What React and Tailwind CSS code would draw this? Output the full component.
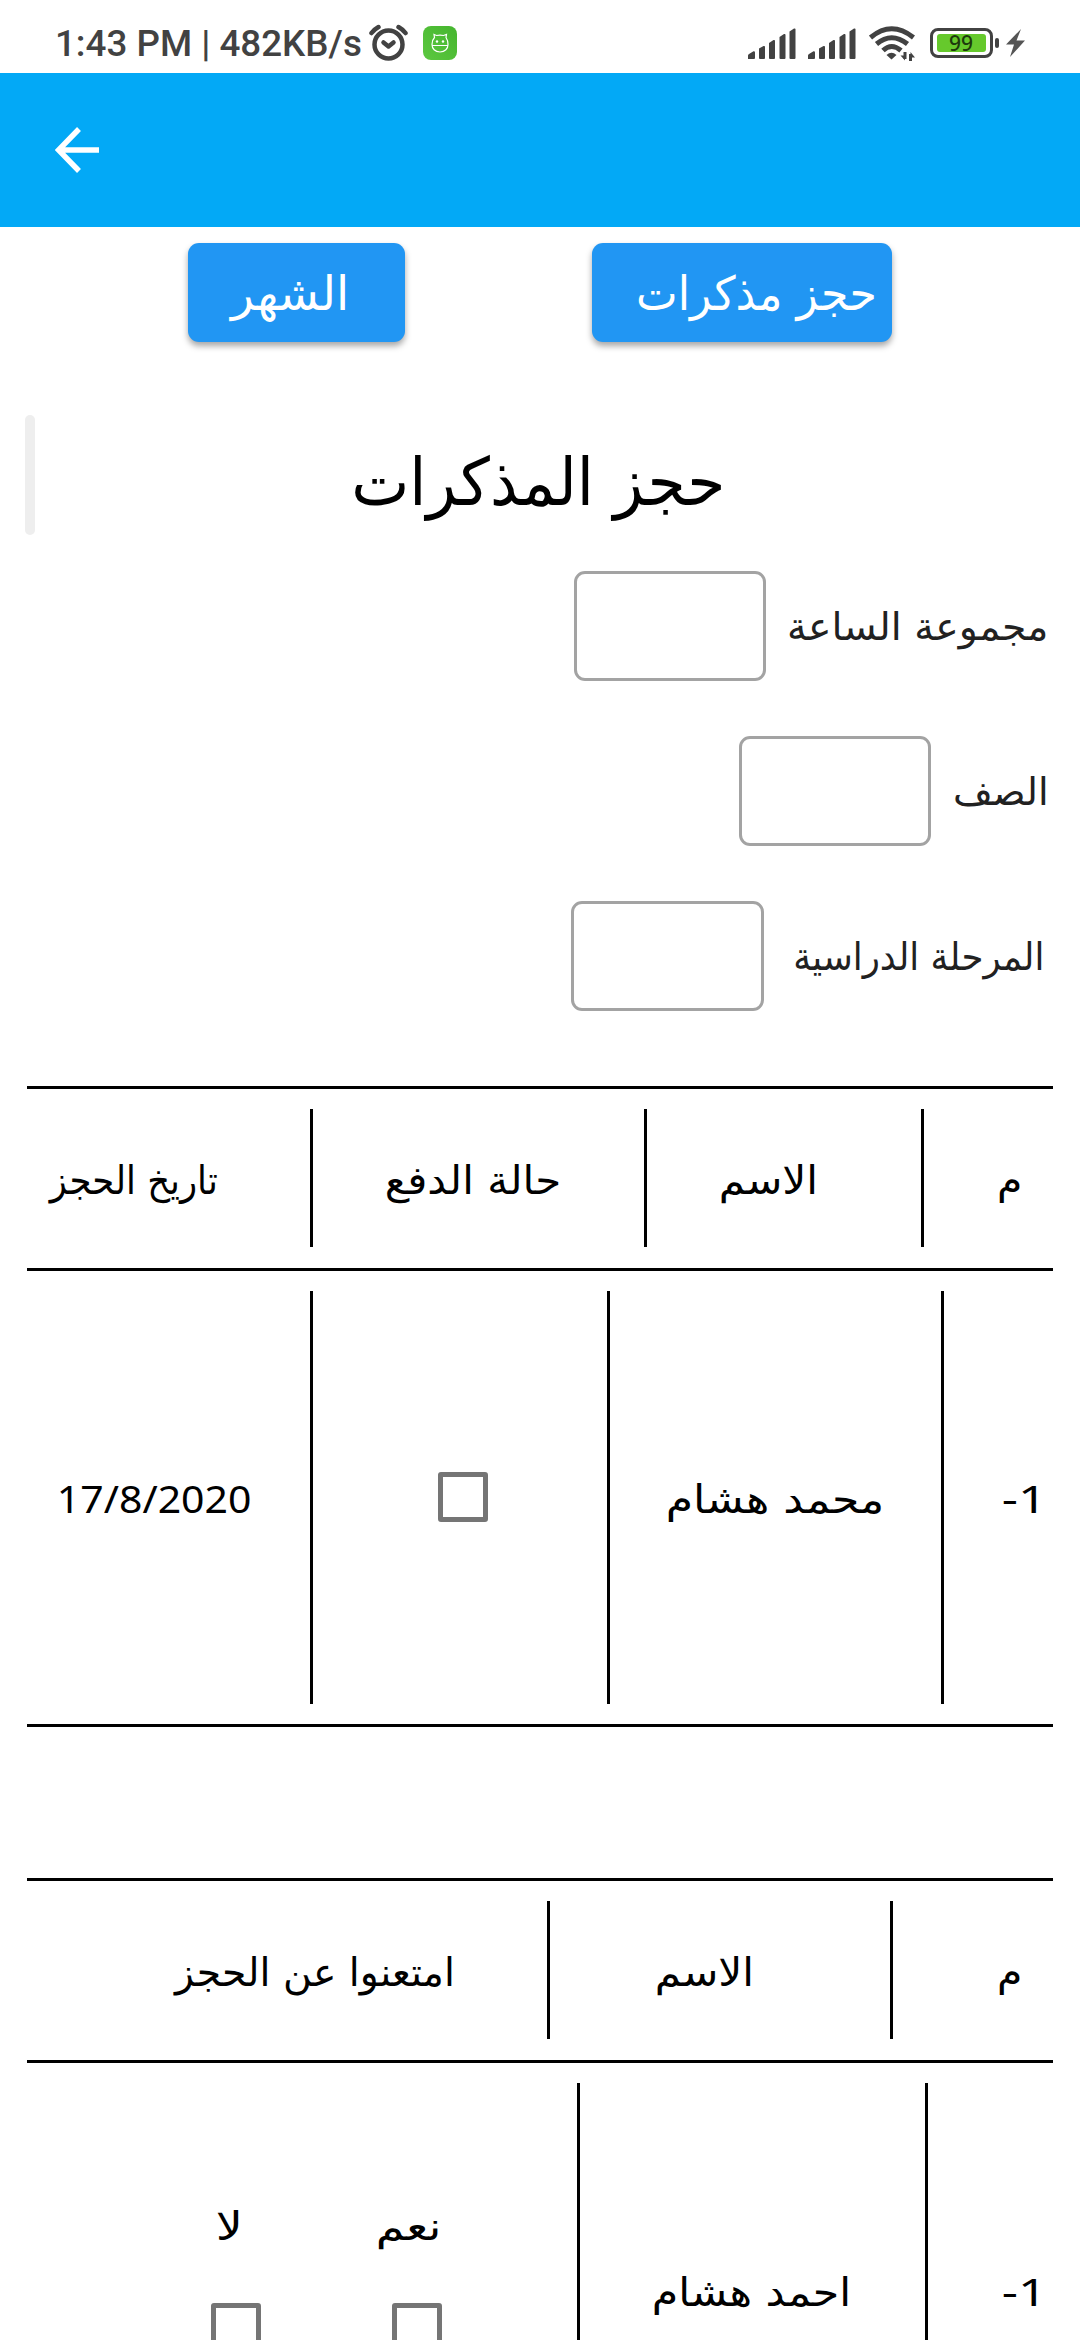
import { useLayoutEffect, useRef, useState } from "react";

// Single line of text whose visible glyphs span exactly the width of its box.
function Fit({ className = "", dir = "rtl", children }) {
  const box = useRef(null);
  const [fit, setFit] = useState({ scale: 1, shift: 0 });
  useLayoutEffect(() => {
    const measure = () => {
      const style = getComputedStyle(box.current);
      const ctx = document.createElement("canvas").getContext("2d");
      ctx.font = `${style.fontWeight} ${style.fontSize} ${style.fontFamily}`;
      ctx.direction = dir;
      ctx.textAlign = "left";
      const m = ctx.measureText(children);
      const ink = m.actualBoundingBoxLeft + m.actualBoundingBoxRight;
      const scale = box.current.clientWidth / ink;
      setFit({ scale, shift: m.actualBoundingBoxLeft * scale });
    };
    measure();
    document.fonts.ready.then(measure);
  }, [children, dir]);
  return (
    <div ref={box} dir="ltr" className={`shrink-0 whitespace-nowrap leading-none ${className}`}>
      <span
        dir={dir}
        className="inline-block origin-left align-top"
        style={{ transform: `translateX(${fit.shift}px) scaleX(${fit.scale})` }}
      >
        {children}
      </span>
    </div>
  );
}

const Line = ({ className = "" }) => <div className={`shrink-0 w-[3px] bg-black ${className}`} />;
const Rule = () => <div className="ml-[27px] h-[3px] w-[1026px] shrink-0 bg-black" />;
const Check = ({ className = "" }) => (
  <div className={`size-[50px] shrink-0 rounded-[3px] border-[5px] border-[#757575] ${className}`} />
);

function Signal() {
  return (
    <svg className="h-[31px] w-[48px]" viewBox="0 0 48 31" fill="#424242">
      <path d="M0 31V27.5Q0 26.5 1 26L5.5 23.3Q7 23 7 24.5V30Q7 31 6 31Z" />
      <path d="M11 30V20.5L15.5 18Q17 17.5 17 19V30Q17 31 16 31H12Q11 31 11 30Z" />
      <path d="M21 30V15L25.500 12Q27 11.500 27 13V30Q27 31 26 31H22Q21 31 21 30Z" />
      <path d="M31.500 30V9L36 6Q37.500 5.500 37.500 7V30Q37.500 31 36.500 31H32.500Q31.500 31 31.500 30Z" />
      <path d="M41.500 30V3.500L46 .5Q47.500 0 47.500 1.500V30Q47.500 31 46.500 31H42.500Q41.500 31 41.500 30Z" />
    </svg>
  );
}

function StatusBar() {
  return (
    <div className="flex h-[73px] shrink-0 items-start bg-white text-[#424242]">
      <Fit dir="ltr" className="ml-[58px] mt-[26px] w-[303px] font-['Roboto'] text-[36.5px] font-medium">
        1:43 PM | 482KB/s
      </Fit>
      <svg className="ml-[8px] mt-[24px] h-[38px] w-[39px]" viewBox="0 0 39 38" fill="none" stroke="#424242">
        <circle cx="19.500" cy="20.500" r="14" strokeWidth="4.500" />
        <path d="M2.500 9Q5 5.500 9.500 3M36.500 9Q34 5.500 29.500 3" strokeWidth="4.500" strokeLinecap="round" />
        <path d="M14.500 18.500L19.500 22.500L24.500 18.500" strokeWidth="4.500" strokeLinecap="round" strokeLinejoin="round" />
      </svg>
      <svg className="ml-[15px] mt-[26px] h-[34px] w-[34px]" viewBox="0 0 34 34">
        <defs>
          <linearGradient id="leaf" x1="0" y1="1" x2="1" y2="0">
            <stop offset="0" stopColor="#5cc840" />
            <stop offset="1" stopColor="#45b52e" />
          </linearGradient>
        </defs>
        <rect width="34" height="34" rx="8" fill="url(#leaf)" />
        <path
          d="M9 18.500C9 22.500 12 26 17 26S25 22.500 25 18.500C25 15 24 13 23 11.500L23.500 8.500L20.500 9.500Q17 8.800 13.500 9.500L11 8.500L11.500 11.500C9.500 13.500 9 15.500 9 18.500ZM9 19.500H25"
          fill="none"
          stroke="#fff"
          strokeWidth="1.200"
        />
        <circle cx="14" cy="15.500" r="1.200" fill="#fff" />
        <circle cx="20" cy="15.500" r="1.200" fill="#fff" />
      </svg>
      <div className="ml-[291px] mt-[28px] flex gap-[12px]">
        <Signal />
        <Signal />
      </div>
      <svg className="ml-[13px] mt-[26px] h-[35px] w-[46px]" viewBox="0 0 46 35" fill="none" stroke="#424242" strokeWidth="5">
        <path d="M1.500 11.500Q22.500 -6 44.500 11.500" />
        <path d="M7.500 18Q22.500 5.500 38.500 18" />
        <path d="M14 24.500Q22.500 16.500 32 24.500" />
        <path d="M17.500 29Q22.500 24.500 27.500 29L22.500 33.500Z" fill="#424242" stroke="none" />
        <path d="M36 26V33M41.500 35V28" strokeWidth="3" />
        <path d="M31.500 29.500H36V34.500ZM46 31.500H41.500V26Z" fill="#424242" stroke="none" />
      </svg>
      <div className="ml-[15px] mt-[28px] flex h-[30px] w-[63px] items-center justify-center rounded-[8px] border-[3px] border-[#424242]">
        <div className="flex h-[18px] w-[49px] items-center rounded-[3px] bg-[#66c92c] pl-[12px] text-[#1d3a0c]">
          <Fit dir="ltr" className="w-[24px] font-['Noto_Sans'] text-[21px] font-medium">99</Fit>
        </div>
      </div>
      <div className="ml-[2px] mt-[38px] h-[10px] w-[4px] rounded-[2px] bg-[#424242]" />
      <svg className="ml-[7px] mt-[29px] h-[28px] w-[19px]" viewBox="0 0 19 28" fill="#555">
        <path d="M15 0L0 15.500H8L4 28L19 11.500H10.500Z" />
      </svg>
    </div>
  );
}

export default function App() {
  return (
    <div className="flex h-[2340px] w-[1080px] flex-col overflow-hidden bg-white font-['DejaVu_Sans',sans-serif] text-[39px] text-black">
      <StatusBar />
      <header className="flex h-[154px] shrink-0 items-center bg-[#03a9f6] pl-[55px]">
        <svg className="h-[46px] w-[44px]" viewBox="0 0 44 46" fill="none" stroke="#fff" strokeWidth="5.500">
          <path d="M44 23H5M24 2L3.500 23L24 44" />
        </svg>
      </header>

      <div className="flex h-[188px] shrink-0 items-start pt-[16px] text-[47px] text-white">
        <button className="ml-[188px] flex h-[99px] w-[217px] rounded-[11px] bg-[#2196f3] pl-[41px] pt-[27px] shadow-[0_4px_6px_rgba(0,0,0,0.35)]">
          <Fit className="w-[116px]">الشهر</Fit>
        </button>
        <button className="ml-[187px] flex h-[99px] w-[300px] rounded-[11px] bg-[#2196f3] pl-[46px] pt-[27px] shadow-[0_4px_6px_rgba(0,0,0,0.35)]">
          <Fit className="w-[236px]">حجز مذكرات</Fit>
        </button>
      </div>

      <div className="flex h-[155px] shrink-0 items-start">
        <div className="ml-[25px] h-[120px] w-[10px] rounded-full bg-[#eeeeee]" />
        <h1 className="ml-[320px] mt-[35px] text-[66px]">
          <Fit className="w-[366px]">حجز المذكرات</Fit>
        </h1>
      </div>

      <div className="flex h-[516px] shrink-0 flex-col gap-[55px] pt-[1px] text-[38px] text-[#212121]">
        <div className="flex h-[110px] items-start">
          <div className="ml-[574px] h-[110px] w-[192px] rounded-[11px] border-[3px] border-[#a3a3a3]" />
          <Fit className="ml-[23px] mt-[37px] w-[257px]">مجموعة الساعة</Fit>
        </div>
        <div className="flex h-[110px] items-start">
          <div className="ml-[739px] h-[110px] w-[192px] rounded-[11px] border-[3px] border-[#a3a3a3]" />
          <Fit className="ml-[24px] mt-[37px] w-[90px]">الصف</Fit>
        </div>
        <div className="flex h-[110px] items-start">
          <div className="ml-[571px] h-[110px] w-[193px] rounded-[11px] border-[3px] border-[#a3a3a3]" />
          <Fit className="ml-[31px] mt-[37px] w-[246px]">المرحلة الدراسية</Fit>
        </div>
      </div>

      <Rule />
      <div className="flex h-[179px] shrink-0 items-start pt-[20px]">
        <Fit className="ml-[48px] mt-[52px] w-[169px]">تاريخ الحجز</Fit>
        <Line className="ml-[93px] h-[138px]" />
        <Fit className="ml-[74px] mt-[52px] w-[172px]">حالة الدفع</Fit>
        <Line className="ml-[85px] h-[138px]" />
        <Fit className="ml-[74px] mt-[52px] w-[94px]">الاسم</Fit>
        <Line className="ml-[106px] h-[138px]" />
        <Fit className="ml-[75px] mt-[52px] w-[21px]">م</Fit>
      </div>
      <Rule />
      <div className="flex h-[453px] shrink-0 items-start pt-[20px]">
        <Fit dir="ltr" className="ml-[60px] mt-[187px] w-[190px] font-['Noto_Sans']">17/8/2020</Fit>
        <Line className="ml-[60px] h-[413px]" />
        <Check className="ml-[125px] mt-[181px]" />
        <Line className="ml-[119px] h-[413px]" />
        <Fit className="ml-[58px] mt-[189px] w-[213px]">محمد هشام</Fit>
        <Line className="ml-[60px] h-[413px]" />
        <Fit dir="ltr" className="ml-[59px] mt-[187px] w-[33px] font-['Noto_Sans']">-1</Fit>
      </div>
      <Rule />
      <div className="h-[151px] shrink-0" />

      <Rule />
      <div className="flex h-[179px] shrink-0 items-start pt-[20px]">
        <Fit className="ml-[173px] mt-[52px] w-[279px]">امتعنوا عن الحجز</Fit>
        <Line className="ml-[95px] h-[138px]" />
        <Fit className="ml-[107px] mt-[52px] w-[94px]">الاسم</Fit>
        <Line className="ml-[139px] h-[138px]" />
        <Fit className="ml-[106px] mt-[52px] w-[21px]">م</Fit>
      </div>
      <Rule />
      <div className="flex h-[277px] shrink-0 items-start overflow-hidden pt-[20px]">
        <div className="ml-[211px] flex w-[50px] flex-col pt-[124px]">
          <Fit className="ml-[6px] w-[22px]">لا</Fit>
          <Check className="mt-[57px]" />
        </div>
        <div className="ml-[117px] flex w-[64px] flex-col pt-[124px]">
          <Fit className="w-[60px]">نعم</Fit>
          <Check className="ml-[14px] mt-[57px]" />
        </div>
        <Line className="ml-[135px] h-[300px]" />
        <Fit className="ml-[74px] mt-[190px] w-[194px]">احمد هشام</Fit>
        <Line className="ml-[77px] h-[300px]" />
        <Fit dir="ltr" className="ml-[75px] mt-[188px] w-[33px] font-['Noto_Sans']">-1</Fit>
      </div>
    </div>
  );
}
